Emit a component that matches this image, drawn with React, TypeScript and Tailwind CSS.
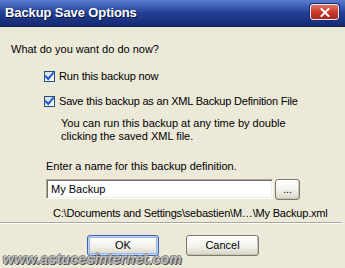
import React from 'react';

const font = { fontFamily: '"Liberation Sans", Arial, sans-serif' };

function Checkbox() {
  return (
    <span className="w-[11px] h-[11px] border border-[#1c5180] bg-gradient-to-br from-[#dcdcd7] to-white flex items-center justify-center shrink-0">
      <svg width="9" height="9" viewBox="0 0 9 9">
        <path d="M1 4.5 L3.2 7 L8 1.2" fill="none" stroke="#2156d6" strokeWidth="2" strokeLinecap="square" />
      </svg>
    </span>
  );
}

function XpButton({ label, isDefault, className }: { label: string; isDefault?: boolean; className: string }) {
  return (
    <button
      className={
        'h-[21px] rounded-[3px] border text-[11px] text-black bg-gradient-to-b from-white via-[#f4f3ee] to-[#d8d4c6] flex items-center justify-center ' +
        (isDefault
          ? 'border-[#3a5fa8] shadow-[inset_0_0_0_1px_#c2d5f8,inset_0_0_0_2px_#95b5ef] '
          : 'border-[#7d7b70] shadow-[inset_-1px_-1px_0_#c9c4b4] ') +
        className
      }
      style={font}
    >
      {label}
    </button>
  );
}

export default function App() {
  return (
    <div className="w-[345px] h-[268px] bg-[#ece9d8] overflow-hidden relative text-[11px] leading-[13px] text-black" style={font}>
      {/* title bar */}
      <div className="h-[27px] flex items-center justify-between pl-[5px] pr-[6px] bg-gradient-to-b from-[#5b7dd0] via-[#233f94] to-[#172a73] border-b border-[#0d1c54]">
        <span className="text-white font-bold text-[13px] tracking-[-0.1px] [text-shadow:1px_1px_0_#0b1840] -mt-[1px]">
          Backup Save Options
        </span>
        <span className="w-[29px] h-[16px] -mt-[2px] rounded-[3px] border border-[#e8e8f0] bg-gradient-to-b from-[#e4735f] via-[#c93a28] to-[#a9281a] flex items-center justify-center shadow-[0_0_0_1px_#1b2d78]">
          <svg width="10" height="9" viewBox="0 0 10 9">
            <path d="M1.5 1 L8.5 8 M8.5 1 L1.5 8" stroke="white" strokeWidth="2" strokeLinecap="square" />
          </svg>
        </span>
      </div>

      {/* body */}
      <div className="pt-[16px] flex flex-col">
        <div className="pl-[11px]">What do you want do do now?</div>

        <div className="mt-[14px] pl-[44px] flex items-center gap-[4px]">
          <Checkbox />
          <span className="tracking-[-0.15px]">Run this backup now</span>
        </div>

        <div className="mt-[12px] pl-[44px] flex items-center gap-[4px]">
          <Checkbox />
          <span className="tracking-[-0.2px]">Save this backup as an XML Backup Definition File</span>
        </div>

        <div className="mt-[9px] pl-[61px]">
          <div>You can run this backup at any time by double</div>
          <div>clicking the saved XML file.</div>
        </div>

        <div className="mt-[17px] pl-[46px]">Enter a name for this backup definition.</div>

        <div className="mt-[6px] pl-[46px] flex gap-[2px]">
          <div className="w-[227px] h-[20px] bg-white border border-[#aca899] border-b-white border-r-white shadow-[inset_1px_1px_0_#716f64,inset_-1px_-1px_0_#f1efe2] flex items-center pl-[4px]">
            My Backup
          </div>
          <XpButton label="..." className="w-[25px] h-[20px] leading-[10px] pb-[2px]" />
        </div>

        <div className="mt-[7px] pl-[53px] tracking-[-0.2px]">C:\Documents and Settings\sebastien\M…\My Backup.xml</div>

        <div className="mt-[2px] w-[342px] h-[2px] border-t border-[#aca899] border-b border-b-white" />

        <div className="mt-[11px] pl-[87px] flex gap-[27px]">
          <XpButton label="OK" isDefault className="w-[72px]" />
          <XpButton label="Cancel" className="w-[73px]" />
        </div>
      </div>

      {/* watermark */}
      <span className="absolute left-[3px] top-[253px] text-[14px] font-bold italic tracking-[0.3px] text-[#bdbdbd] [text-shadow:1px_1px_0_#4d4d4d,-1px_0_0_#7a7a7a,0_-1px_0_#8a8a8a]">
        www.astucesinternet.com
      </span>
    </div>
  );
}
